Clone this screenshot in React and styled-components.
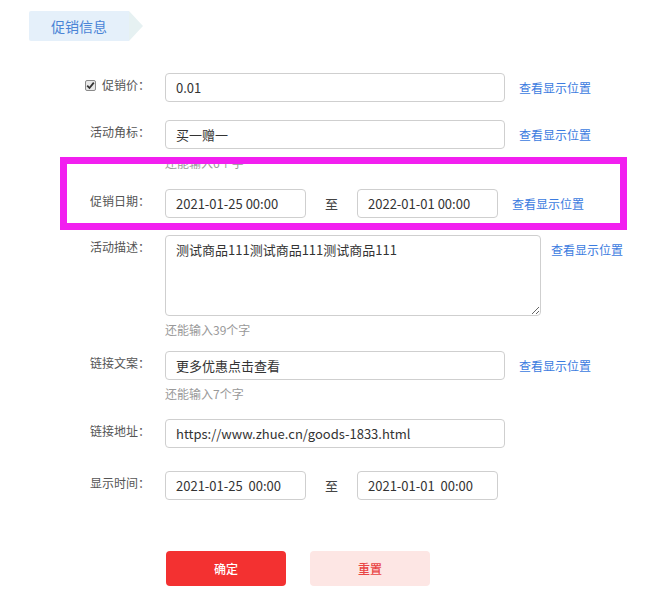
import React from 'react'
import styled, {createGlobalStyle} from 'styled-components'

const GlobalStyle = createGlobalStyle`
  body {
    margin: 0;
    background: #fff;
    font-family: "Noto Sans CJK SC", "Microsoft YaHei", sans-serif;
  }
`

function App() {
  return (
    <>
      <GlobalStyle />
      <Page>
        <Tab>促销信息</Tab>
        <Form>
          <Item $gap={18}>
            <Row>
              <Label>
                <Check>
                  <svg width="9" height="9" viewBox="0 0 9 9">
                    <path d="M1.2 4.6 L3.5 7 L7.8 1.6" fill="none" stroke="#333" strokeWidth="1.8" />
                  </svg>
                </Check>
                促销价：
              </Label>
              <Input readOnly value="0.01" />
              <Link>查看显示位置</Link>
            </Row>
          </Item>

          <Item $gap={16}>
            <Row>
              <Label>活动角标：</Label>
              <Input readOnly value="买一赠一" />
              <Link>查看显示位置</Link>
            </Row>
            <Hint>还能输入6个字</Hint>
          </Item>

          <Item $gap={17}>
            <Row>
              <Label>促销日期：</Label>
              <Input $w={141} readOnly value="2021-01-25 00:00" />
              <To>至</To>
              <Input $w={141} readOnly value="2022-01-01 00:00" />
              <Link>查看显示位置</Link>
            </Row>
            <Marker />
          </Item>

          <Item $gap={11}>
            <Row>
              <Label>活动描述：</Label>
              <Area readOnly value="测试商品111测试商品111测试商品111" />
              <Link $gap={10}>查看显示位置</Link>
            </Row>
            <Hint>还能输入39个字</Hint>
          </Item>

          <Item $gap={15}>
            <Row>
              <Label>链接文案：</Label>
              <Input readOnly value="更多优惠点击查看" />
              <Link>查看显示位置</Link>
            </Row>
            <Hint>还能输入7个字</Hint>
          </Item>

          <Item $gap={23}>
            <Row>
              <Label>链接地址：</Label>
              <Input readOnly value="https://www.zhue.cn/goods-1833.html" />
            </Row>
          </Item>

          <Item $gap={51}>
            <Row>
              <Label>显示时间：</Label>
              <Input $w={141} readOnly value="2021-01-25  00:00" />
              <To>至</To>
              <Input $w={141} readOnly value="2021-01-01  00:00" />
            </Row>
          </Item>

          <Buttons>
            <Button $primary>确定</Button>
            <Button>重置</Button>
          </Buttons>
        </Form>
      </Page>
    </>
  )
}

export default App

const Page = styled.div`
  padding-top: 11px;
  width: 650px;
`

const Tab = styled.div`
  position: relative;
  margin-left: 29px;
  width: 100px;
  height: 30px;
  line-height: 30px;
  box-sizing: border-box;
  padding-left: 22px;
  background: #e5f0fa;
  border-radius: 2px 0 0 2px;
  color: #4a84d6;
  font-size: 14px;
  &::after{
    content: '';
    position: absolute;
    left: 100px;
    top: 0;
    border-top: 15px solid transparent;
    border-bottom: 15px solid transparent;
    border-left: 14px solid #e6f1f2;
  }
`

const Form = styled.div`
  margin-top: 32px;
`

const Item = styled.div`
  position: relative;
  margin-bottom: ${p => p.$gap}px;
`

const Row = styled.div`
  display: flex;
  align-items: flex-start;
`

const Label = styled.div`
  width: 150px;
  margin-right: 15px;
  display: flex;
  align-items: center;
  justify-content: flex-end;
  line-height: 24px;
  font-size: 12px;
  color: #555;
`

const Check = styled.span`
  display: inline-flex;
  align-items: center;
  justify-content: center;
  width: 11px;
  height: 11px;
  box-sizing: border-box;
  margin-right: 6px;
  border: 1px solid #8a8a8a;
  border-radius: 2px;
  background: #e8e8e8;
`

const Input = styled.input`
  width: ${p => p.$w || 340}px;
  height: 29px;
  box-sizing: border-box;
  padding: 0 10px;
  border: 1px solid #cfcfcf;
  border-radius: 4px;
  outline: none;
  font-family: inherit;
  font-size: 13px;
  color: #333;
  background: #fff;
`

const Area = styled.textarea`
  width: 376px;
  height: 81px;
  box-sizing: border-box;
  padding: 4px 10px;
  margin: 0;
  border: 1px solid #cfcfcf;
  border-radius: 4px;
  outline: none;
  font-family: inherit;
  font-size: 13px;
  line-height: 20px;
  color: #333;
  resize: both;
`

const To = styled.span`
  width: 51px;
  text-align: center;
  line-height: 29px;
  font-size: 13px;
  color: #444;
`

const Link = styled.a`
  margin-left: ${p => p.$gap || 14}px;
  line-height: 29px;
  font-size: 12px;
  color: #3b7be0;
  cursor: pointer;
`

const Hint = styled.div`
  margin-top: 4px;
  margin-left: 165px;
  line-height: 20px;
  font-size: 12px;
  color: #999;
`

const Marker = styled.div`
  position: absolute;
  top: -32px;
  left: 60px;
  width: 567px;
  height: 73px;
  box-sizing: border-box;
  border: 7px solid #f21ff0;
  pointer-events: none;
`

const Buttons = styled.div`
  display: flex;
  gap: 24px;
  margin-left: 166px;
`

const Button = styled.button`
  width: 120px;
  height: 35px;
  border: none;
  border-radius: 4px;
  font-family: inherit;
  font-size: 12px;
  font-weight: 500;
  background: ${p => p.$primary ? '#f33131' : '#fde6e4'};
  color: ${p => p.$primary ? '#fff' : '#e94444'};
`
